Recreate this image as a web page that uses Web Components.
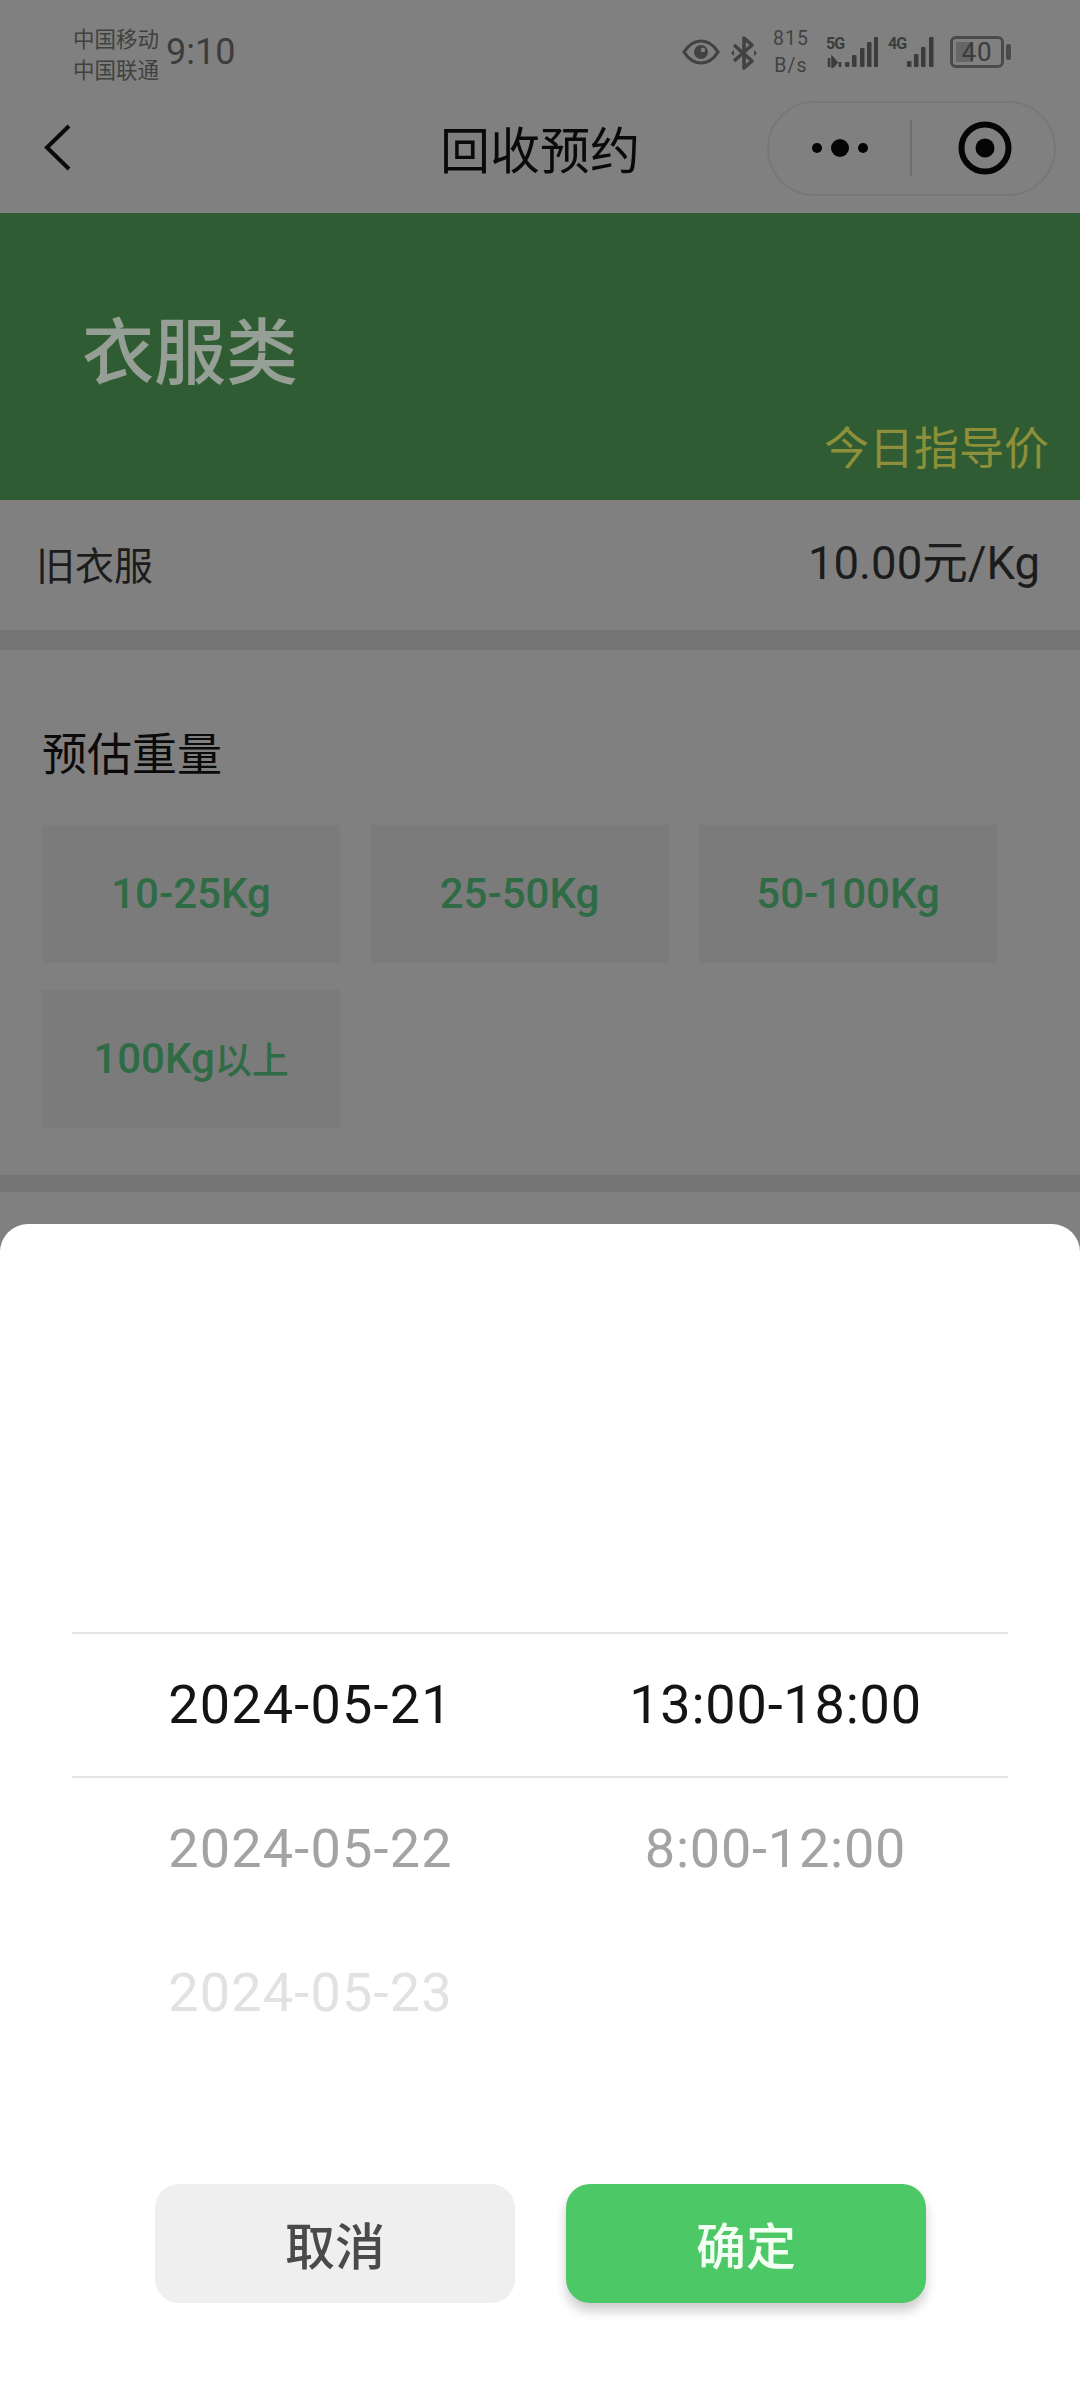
<!DOCTYPE html>
<html lang="zh-CN"><head><meta charset="utf-8"><title>回收预约</title>
<style>
html,body{margin:0;padding:0;background:#808080}
body{width:1080px;height:2400px;overflow:hidden;font-family:Roboto,"Noto Sans CJK SC",sans-serif;display:flex;flex-direction:column}
</style></head><body>
<app-status></app-status>
<app-nav>回收预约</app-nav>
<category-header name="衣服类" note="今日指导价"></category-header>
<price-row name="旧衣服" price="10.00元/Kg"></price-row>
<gap-bar></gap-bar>
<weight-section heading="预估重量">
  <weight-chip>10-25Kg</weight-chip>
  <weight-chip>25-50Kg</weight-chip>
  <weight-chip>50-100Kg</weight-chip>
  <weight-chip>100Kg<span style="font-size:37px">以上</span></weight-chip>
</weight-section>
<gap-bar thin></gap-bar>
<picker-sheet>
  <picker-column slot="date" style="letter-spacing:1.2px"><span>2024-05-21</span><span>2024-05-22</span><span>2024-05-23</span></picker-column>
  <picker-column slot="time" style="letter-spacing:.8px"><span>13:00-18:00</span><span>8:00-12:00</span></picker-column>
  <sheet-button slot="actions">取消</sheet-button>
  <sheet-button slot="actions" primary>确定</sheet-button>
</picker-sheet>
<script>
const FONT='Roboto,"Noto Sans CJK SC",sans-serif';
function def(name,html){
  customElements.define(name,class extends HTMLElement{
    constructor(){super();this.attachShadow({mode:'open'});}
    connectedCallback(){
      this.shadowRoot.innerHTML=typeof html==='function'?html(this):html;
    }
  });
}
def('app-status',`<style>
:host{display:flex;flex:none;height:100px;align-items:flex-start;color:#3c3c3c;font-family:${FONT};box-sizing:border-box;padding-left:73px}
.car{font:21.5px/31px "Noto Sans CJK SC",sans-serif;margin-top:22px;width:93px;color:#404040}
.car div{white-space:nowrap}
.time{font-size:36px;line-height:42px;margin-top:31px;width:516px}
svg{display:block;flex:none}
.net{width:42px;margin-left:12px;text-align:center;font-size:19.5px;line-height:27px;margin-top:25px;letter-spacing:1px;color:#424242}
.net div{white-space:nowrap}
.cell{position:relative;margin-left:14px;margin-top:36px}
.g{font:700 16px/15px Roboto,sans-serif;position:absolute;left:0;top:0;letter-spacing:-1px;color:#3c3c3c}
.bat{width:54px;height:32px;box-sizing:border-box;border:3px solid #4a4a4a;border-radius:6px;margin-left:10px;margin-top:36px;position:relative;font-size:26px;line-height:26px;display:flex;align-items:center;justify-content:center;letter-spacing:1px;color:#3c3c3c;background:linear-gradient(90deg,#666 0,#666 20px,transparent 20px);background-clip:content-box;padding:3px}
.nub{width:5px;height:16px;background:#4a4a4a;border-radius:2px;margin:44px 0 0 2px}
</style>
<div class="car"><div>中国移动</div><div>中国联通</div></div>
<div class="time">9:10</div>
<svg width="38" height="26" viewBox="0 0 38 26" style="margin-top:39px" fill="none"><path d="M2 13C7 5 13 2 19 2s12 3 17 11c-5 8-11 11-17 11S7 21 2 13Z" stroke="#424242" stroke-width="3.2"/><circle cx="19" cy="13" r="7" fill="#424242"/><circle cx="21" cy="11" r="2.2" fill="#808080"/></svg>
<svg width="28" height="36" viewBox="0 0 28 36" style="margin-top:35px;margin-left:10px" fill="none"><path d="M4 10 22 26 14 33V3l8 7L4 26" stroke="#424242" stroke-width="3.6" stroke-linejoin="round"/><path d="M1 18l3-3v6zM27 18l-3-3v6z" fill="#424242"/></svg>
<div class="net"><div>815</div><div>B/s</div></div>
<div class="cell" style="width:52px;height:32px"><span class="g">5G</span>
<svg width="52" height="32" viewBox="0 0 52 32"><path d="M3 22v9M6.500 31v-9l4 4.500zM14 26v5" stroke="#3c3c3c" stroke-width="2.600" fill="#3c3c3c"/><rect x="19" y="26" width="4.500" height="5" rx="1" fill="#3c3c3c"/><rect x="26" y="19" width="4.500" height="12" rx="1" fill="#3c3c3c"/><rect x="34" y="12" width="4.500" height="19" rx="1" fill="#3c3c3c"/><rect x="41" y="6" width="4.500" height="25" rx="1" fill="#3c3c3c"/><rect x="48" y="1" width="4.500" height="30" rx="1" fill="#3c3c3c"/></svg></div>
<div class="cell" style="width:52px;height:32px;margin-left:10px"><span class="g">4G</span>
<svg width="52" height="32" viewBox="0 0 52 32"><rect x="19" y="25" width="4.500" height="6" rx="1" fill="#3c3c3c"/><rect x="26" y="18" width="4.500" height="13" rx="1" fill="#3c3c3c"/><rect x="33" y="11" width="4.500" height="20" rx="1" fill="#3c3c3c"/><rect x="41" y="1" width="4.500" height="30" rx="1" fill="#3c3c3c"/></svg></div>
<div class="bat">40</div><div class="nub"></div>`);
def('app-nav',`<style>
:host{display:grid;flex:none;grid-template-columns:1fr auto 1fr;align-items:center;height:113px;box-sizing:border-box;padding:0 24px 17px 24px;color:#0a0a0a}
.t{font:400 50px/60px "Noto Sans CJK SC",sans-serif;padding-bottom:3px}
.back{margin-left:20px}
.cap{justify-self:end;width:289px;height:95px;box-sizing:border-box;border:2px solid #777;border-radius:48px;display:flex;align-items:center}
.d{width:141px;display:flex;justify-content:center}
.sep{width:2px;height:56px;background:#6e6e6e}
.tg{flex:1;display:flex;justify-content:center;padding-left:4px}
svg{display:block}
</style>
<svg class="back" width="30" height="50" viewBox="0 0 30 50" fill="none"><path d="M25 3 3 24.500 25 46" stroke="#0a0a0a" stroke-width="4"/></svg>
<div class="t"><slot></slot></div>
<div class="cap"><div class="d"><svg width="60" height="20" viewBox="0 0 60 20"><circle cx="7" cy="10" r="5" fill="#050505"/><circle cx="30" cy="10" r="9" fill="#050505"/><circle cx="53" cy="10" r="5" fill="#050505"/></svg></div><div class="sep"></div>
<div class="tg"><svg width="54" height="54" viewBox="0 0 54 54" fill="none"><circle cx="27" cy="27" r="23.500" stroke="#050505" stroke-width="6"/><circle cx="27" cy="27" r="9.500" fill="#050505"/></svg></div></div>`);
def('category-header',el=>`<style>
:host{display:block;flex:none;height:287px;box-sizing:border-box;background:#2f5c32;padding:94px 31px 0 82px;overflow:hidden}
.n{font:500 72px/80px "Noto Sans CJK SC",sans-serif;color:#959f95}
.o{font:400 45px/50px "Noto Sans CJK SC",sans-serif;color:#8d8f3a;text-align:right;margin-top:34px}
</style><div class="n">${el.getAttribute('name')}</div><div class="o">${el.getAttribute('note')}</div>`);
def('price-row',el=>`<style>
:host{display:flex;flex:none;height:130px;box-sizing:border-box;padding:0 40px 2px 36px;align-items:center;justify-content:space-between;color:#1c1c1c}
.n{font:400 39px/50px "Noto Sans CJK SC",sans-serif;padding-bottom:2px}
.p{font-family:${FONT};font-size:45.500px;line-height:50px}
</style><div class="n">${el.getAttribute('name')}</div><div class="p">${el.getAttribute('price')}</div>`);
def('gap-bar',`<style>:host{display:block;flex:none;height:20px;background:#747474}:host([thin]){height:17px;margin-bottom:32px}</style>`);
def('weight-section',el=>`<style>
:host{display:block;flex:none;height:525px;box-sizing:border-box;padding:72px 0 0 42px}
h2{margin:0;font:400 45px/60px "Noto Sans CJK SC",sans-serif;color:#0a0a0a}
.g{display:grid;grid-template-columns:repeat(3,298px);grid-auto-rows:138px;column-gap:30.500px;row-gap:27px;margin-top:43px}
</style><h2>${el.getAttribute('heading')}</h2><div class="g"><slot></slot></div>`);
def('weight-chip',`<style>
:host{display:flex;align-items:center;justify-content:center;background:#7b7b7b;color:#2f6b45;font-family:${FONT};font-size:42px;font-weight:500;padding-bottom:2px;box-sizing:border-box}
</style><slot></slot>`);
def('picker-sheet',`<style>
:host{display:flex;flex-direction:column;flex:1;background:#fff;border-radius:28px 28px 0 0;padding-top:408px;box-sizing:border-box}
.p{margin:0 72px;display:grid;grid-template-columns:1fr 1fr;position:relative;height:432px;padding-left:6px}
.ln{position:absolute;left:0;right:0;height:2px;background:#e5e5e5}
.a{display:flex;gap:51px;padding-left:155px;margin-top:120px}
</style>
<div class="p"><div class="ln" style="top:0"></div><div class="ln" style="top:144px"></div><slot name="date"></slot><slot name="time"></slot></div>
<div class="a"><slot name="actions"></slot></div>`);
def('picker-column',`<style>
:host{display:grid;grid-auto-rows:144px;font-family:${FONT};font-size:54px;text-align:center;line-height:146px}
::slotted(span:nth-child(1)){color:#141414}
::slotted(span:nth-child(2)){color:#a3a3a3}
::slotted(span:nth-child(3)){color:#e2e2e2}
</style><slot></slot>`);
def('sheet-button',`<style>
:host{display:flex;align-items:center;justify-content:center;width:360px;height:119px;box-sizing:border-box;padding-bottom:2px;border-radius:24px;background:#efefef;color:#4a4a4a;font:500 50px/60px "Noto Sans CJK SC",sans-serif}
:host([primary]){background:#4dc867;color:#f4fff4;box-shadow:0 8px 12px rgba(0,0,0,.2)}
</style><slot></slot>`);
</script>
</body></html>
